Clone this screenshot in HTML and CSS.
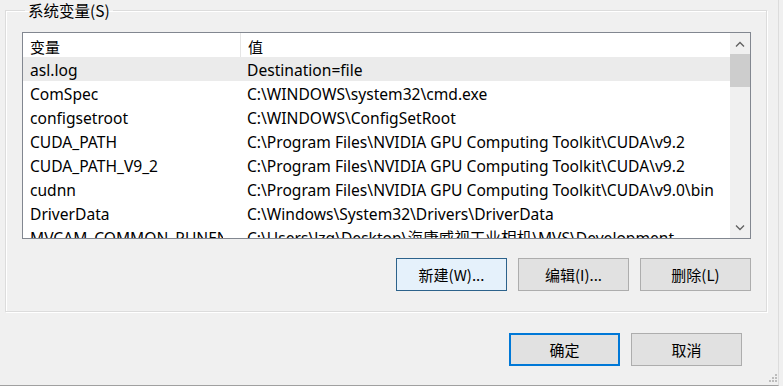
FILE: index.html
```html
<!DOCTYPE html>
<html lang="zh-CN">
<head>
  <meta charset="UTF-8">
  <meta name="viewport" content="width=device-width, initial-scale=1.0">
  <title>环境变量</title>
  <link rel="stylesheet" href="styles.css">
</head>
<body>
  <div class="dialog">
    <fieldset class="group">
      <legend>系统变量(S)</legend>

      <div class="listbox">
        <div class="list">
          <div class="row head">
            <div class="cell name">变量</div>
            <div class="cell value">值</div>
          </div>
          <div class="row selected">
            <div class="cell name">asl.log</div>
            <div class="cell value">Destination=file</div>
          </div>
          <div class="row">
            <div class="cell name">ComSpec</div>
            <div class="cell value">C:\WINDOWS\system32\cmd.exe</div>
          </div>
          <div class="row">
            <div class="cell name">configsetroot</div>
            <div class="cell value">C:\WINDOWS\ConfigSetRoot</div>
          </div>
          <div class="row">
            <div class="cell name">CUDA_PATH</div>
            <div class="cell value">C:\Program Files\NVIDIA GPU Computing Toolkit\CUDA\v9.2</div>
          </div>
          <div class="row">
            <div class="cell name">CUDA_PATH_V9_2</div>
            <div class="cell value">C:\Program Files\NVIDIA GPU Computing Toolkit\CUDA\v9.2</div>
          </div>
          <div class="row">
            <div class="cell name">cudnn</div>
            <div class="cell value">C:\Program Files\NVIDIA GPU Computing Toolkit\CUDA\v9.0\bin</div>
          </div>
          <div class="row">
            <div class="cell name">DriverData</div>
            <div class="cell value">C:\Windows\System32\Drivers\DriverData</div>
          </div>
          <div class="row">
            <div class="cell name">MVCAM_COMMON_RUNENV</div>
            <div class="cell value">C:\Users\lzq\Desktop\海康威视工业相机\MVS\Development</div>
          </div>
        </div>

        <!-- vertical scrollbar -->
        <div class="scrollbar">
          <div class="arrow">
            <svg width="10" height="6" viewBox="0 0 10 6"><path d="M1 5.5 L5 1.5 L9 5.5" fill="none" stroke="#606060" stroke-width="1.3"/></svg>
          </div>
          <div class="thumb"></div>
          <div class="track"></div>
          <div class="arrow">
            <svg width="10" height="6" viewBox="0 0 10 6"><path d="M1 0.5 L5 4.5 L9 0.5" fill="none" stroke="#606060" stroke-width="1.3"/></svg>
          </div>
        </div>
      </div>

      <div class="actions">
        <button class="btn hover">新建(W)...</button>
        <button class="btn">编辑(I)...</button>
        <button class="btn">删除(L)</button>
      </div>
    </fieldset>

    <div class="footer">
      <button class="btn default">确定</button>
      <button class="btn">取消</button>
    </div>

    <!-- size grip -->
    <svg class="grip" width="9" height="9" viewBox="0 0 9 9">
      <rect x="6" y="0" width="2" height="2" fill="#bcbcbc"/>
      <rect x="3" y="3" width="2" height="2" fill="#bcbcbc"/>
      <rect x="6" y="3" width="2" height="2" fill="#bcbcbc"/>
      <rect x="0" y="6" width="2" height="2" fill="#bcbcbc"/>
      <rect x="3" y="6" width="2" height="2" fill="#bcbcbc"/>
      <rect x="6" y="6" width="2" height="2" fill="#bcbcbc"/>
    </svg>
  </div>
</body>
</html>
```

FILE: styles.css
```css
body {
  margin: 0;
  background-color: #f0f0f0;
  font-family: "Segoe UI", "Noto Sans", "Noto Sans CJK SC", sans-serif;
  font-size: 15.6px;
  color: #000;
  overflow: hidden;
}

.dialog {
  position: relative;
  width: 778px;
  height: 385px;
  border-right: 1px solid #dcdcdc;
  border-bottom: 1px solid #a0a0a0;
}

.group {
  margin: 0 11px 0 5px;
  padding: 11px 15px 20px 16px;
  border: 1px solid #dcdcdc;
  box-shadow: inset 1px 1px 0 #fff, 1px 1px 0 #fff;
}

.group legend {
  margin-left: 3px;
  padding: 0 3px;
  line-height: 21px;
  font-family: "Noto Sans CJK SC", sans-serif;
  font-size: 15.5px;
}

.listbox {
  display: flex;
  height: 205px;
  border: 1px solid #828790;
  background-color: #fff;
  overflow: hidden;
}

.list {
  flex: 1;
  overflow: hidden;
}

.row {
  display: flex;
  height: 24px;
  line-height: 21px;
  white-space: nowrap;
}

.row.selected {
  background-color: #ebebeb;
}

.cell {
  padding-top: 3px;
  padding-left: 7px;
  overflow: hidden;
}

.cell.name {
  width: 210px;
  flex: none;
}

/* data rows clip the name a little before the column line */
.row:not(.head) .cell.name {
  width: 193px;
  margin-right: 17px;
}

.cell.value {
  flex: 1;
}

.head .cell {
  font-family: "Noto Sans CJK SC", sans-serif;
  font-size: 15px;
}

.head .cell.name {
  border-right: 1px solid #e5e5e5;
}

.scrollbar {
  width: 20px;
  flex: none;
  display: flex;
  flex-direction: column;
  background-color: #f0f0f0;
}

.arrow {
  height: 21px;
  display: flex;
  align-items: center;
  justify-content: center;
}

.thumb {
  height: 33px;
  background-color: #cdcdcd;
}

.track {
  flex: 1;
}

.actions {
  display: flex;
  justify-content: flex-end;
  gap: 11px;
  margin-top: 19px;
}

.btn {
  width: 111px;
  height: 33px;
  padding: 0;
  background-color: #e1e1e1;
  border: 1px solid #adadad;
  border-radius: 0;
  font-family: "Noto Sans CJK SC", sans-serif;
  font-size: 15px;
  color: #000;
}

.btn.hover {
  background-color: #e5f1fb;
  border-color: #2c628b;
}

.btn.default {
  border: 2px solid #0078d7;
}

.footer {
  display: flex;
  justify-content: flex-end;
  gap: 11px;
  margin-top: 21px;
  padding-right: 36px;
}

.grip {
  position: absolute;
  right: 0;
  bottom: 2px;
}
```
